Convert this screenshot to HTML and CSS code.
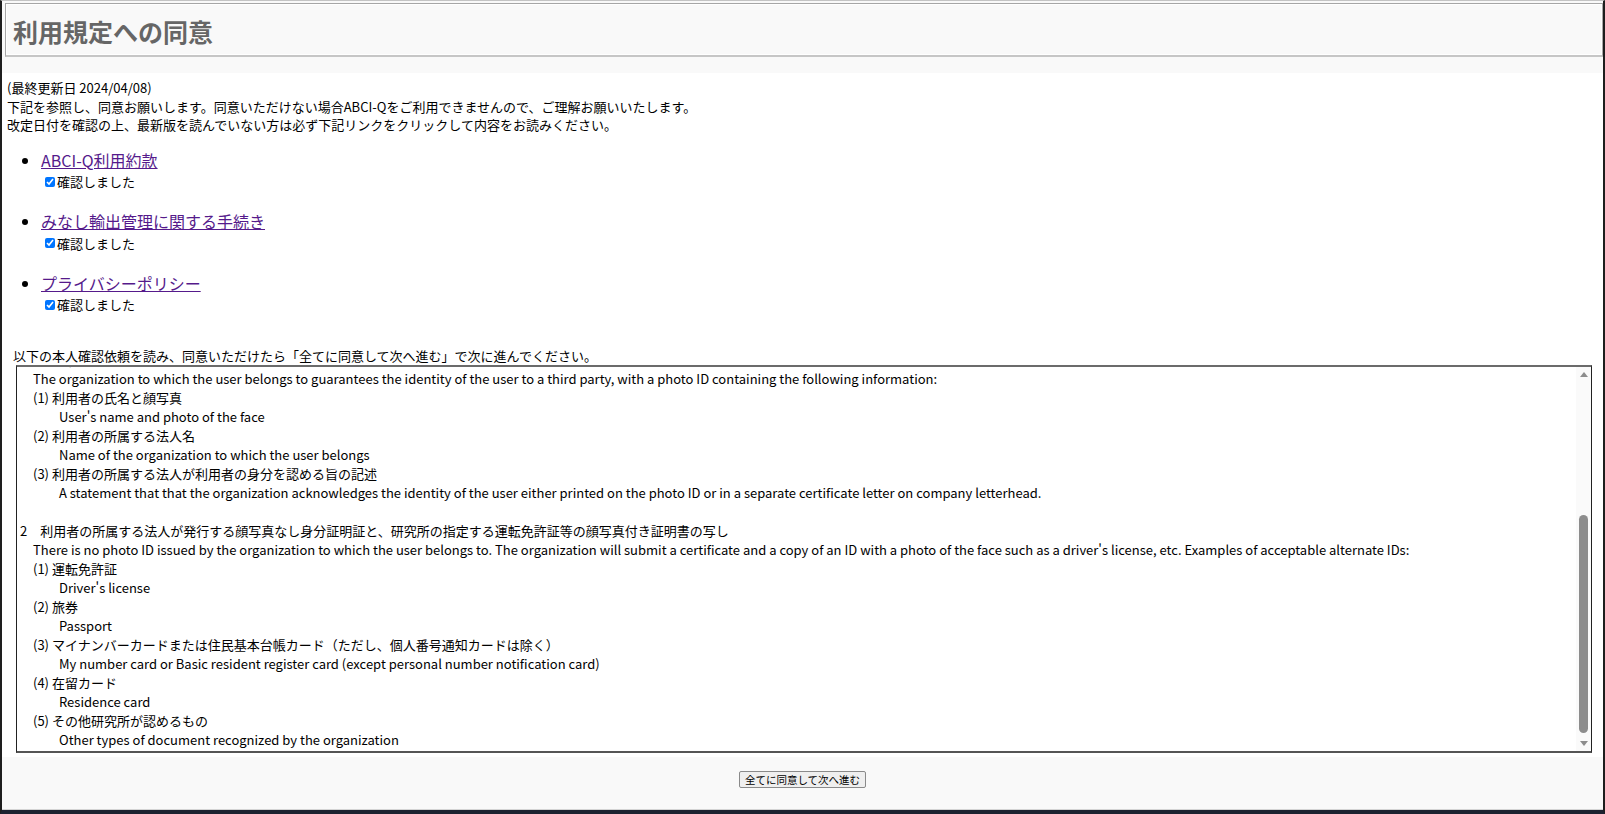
FILE: index.html
```html
<!DOCTYPE html>
<html lang="ja">

<head>
  <meta charset="UTF-8">
  <meta name="viewport" content="width=device-width, initial-scale=1.0">
  <title>利用規定への同意</title>
  <link rel="stylesheet" href="styles.css">
</head>

<body>
  <div class="page">
    <header class="head">
      <h1>利用規定への同意</h1>
    </header>

    <main class="main">
      <p class="intro">(最終更新日 2024/04/08)<br>下記を参照し、同意お願いします。同意いただけない場合ABCI-Qをご利用できませんので、ご理解お願いいたします。<br>改定日付を確認の上、最新版を読んでいない方は必ず下記リンクをクリックして内容をお読みください。</p>

      <ul class="docs">
        <li><a href="#">ABCI-Q利用約款</a><label class="check"><input type="checkbox" checked><span>確認しました</span></label></li>
        <li><a href="#">みなし輸出管理に関する手続き</a><label class="check"><input type="checkbox" checked><span>確認しました</span></label></li>
        <li><a href="#">プライバシーポリシー</a><label class="check"><input type="checkbox" checked><span>確認しました</span></label></li>
      </ul>

      <div class="lead">以下の本人確認依頼を読み、同意いただけたら「全てに同意して次へ進む」で次に進んでください。</div>
      <div class="terms">
        <div class="terms_text">本人確認について
About identity verification

ABCI-Qの利用者は、本人確認のため以下のいずれかの書類を提出してください。
ABCI-Q users are required to submit one of the following documents for identity verification.
提出された書類は本人確認の目的にのみ使用します。
The submitted documents will be used only for the purpose of identity verification.

本人確認依頼
Request for identity verification
以下の1または2のいずれかの書類を提出してください。
1　利用者の所属する法人が発行する顔写真付き身分証明証で、以下の情報が記載されているもの
　The organization to which the user belongs to guarantees the identity of the user to a third party, with a photo ID containing the following information:
　(1) 利用者の氏名と顔写真
　　　User's name and photo of the face
　(2) 利用者の所属する法人名
　　　Name of the organization to which the user belongs
　(3) 利用者の所属する法人が利用者の身分を認める旨の記述
　　　A statement that that the organization acknowledges the identity of the user either printed on the photo ID or in a separate certificate letter on company letterhead.

2　利用者の所属する法人が発行する顔写真なし身分証明証と、研究所の指定する運転免許証等の顔写真付き証明書の写し
　There is no photo ID issued by the organization to which the user belongs to. The organization will submit a certificate and a copy of an ID with a photo of the face such as a driver's license, etc. Examples of acceptable alternate IDs:
　(1) 運転免許証
　　　Driver's license
　(2) 旅券
　　　Passport
　(3) マイナンバーカードまたは住民基本台帳カード（ただし、個人番号通知カードは除く）
　　　My number card or Basic resident register card (except personal number notification card)
　(4) 在留カード
　　　Residence card
　(5) その他研究所が認めるもの
　　　Other types of document recognized by the organization</div>
        <div class="scroll">
          <div class="scroll_btn up"></div>
          <div class="scroll_track">
            <div class="scroll_thumb"></div>
          </div>
          <div class="scroll_btn down"></div>
        </div>
      </div>
    </main>

    <footer class="foot">
      <button type="button">全てに同意して次へ進む</button>
    </footer>
  </div>
  <script>
    const text = document.querySelector('.terms_text')
    text.scrollTop = text.scrollHeight
  </script>
</body>

</html>
```

FILE: styles.css
```css
* {
  box-sizing: border-box;
}

html,
body {
  margin: 0;
  padding: 0;
}

body {
  font-family: "Noto Sans CJK JP", "Noto Sans", sans-serif;
  font-size: 13px;
  color: #000;
  background: #1c2230;
}

.page {
  display: flex;
  flex-direction: column;
  height: 814px;
  background-color: #f9f9f9;
  border-top: 1px solid #c4c4c4;
  border-left: 2px solid #1e1e1e;
  border-right: 2px solid #1e1e1e;
  border-bottom: 4px solid #1c2230;
}

.head {
  height: 54px;
  margin: 2px 0 16px 3px;
  padding: 0 7px;
  display: flex;
  align-items: center;
  background-color: #f9f9f9;
  border: 1px solid #a6a6a6;
  border-bottom: 2px solid #c6c6c6;
  box-shadow: inset 0 0 0 1px #fff;
}

.head h1 {
  margin: 0;
  padding-top: 3px;
  font-size: 25px;
  line-height: 30px;
  font-weight: bold;
  color: #666;
}

.main {
  flex: 1;
  padding: 6px 5px 0;
  background-color: #fff;
}

.intro {
  margin: 0;
  line-height: 18.5px;
}

.docs {
  margin: 14px 0 32px;
  padding-left: 34px;
}

.docs li {
  font-size: 16px;
  line-height: 23.5px;
  margin-bottom: 19px;
}

.docs a {
  color: #551a8b;
}

.check {
  display: flex;
  align-items: center;
  height: 19px;
  font-size: 13px;
  line-height: 19px;
}

.check input {
  width: 10px;
  height: 10px;
  margin: 0 2px 0 4px;
}

.lead {
  margin-left: 6px;
  line-height: 19px;
}

.terms {
  display: flex;
  width: calc(100% - 15px);
  height: 388px;
  margin-left: 9px;
  background-color: #fff;
  border: 1px solid #222;
  border-top: 2px solid #6b6b6b;
  border-bottom: 2px solid #555;
}

.terms_text {
  flex: 1;
  padding: 2px 3px;
  font-size: 13px;
  line-height: 19px;
  white-space: pre;
  overflow: hidden;
}

.scroll {
  width: 15px;
  display: flex;
  flex-direction: column;
  background-color: #fafafa;
}

.scroll_btn {
  height: 15px;
  display: flex;
  justify-content: center;
  align-items: center;
}

.scroll_btn::before {
  content: '';
  border-left: 4px solid transparent;
  border-right: 4px solid transparent;
}

.scroll_btn.up::before {
  border-bottom: 5px solid #8d8d8d;
}

.scroll_btn.down::before {
  border-top: 5px solid #8d8d8d;
}

.scroll_track {
  flex: 1;
  display: flex;
  flex-direction: column;
  justify-content: flex-end;
  align-items: center;
  padding-bottom: 3px;
}

.scroll_thumb {
  width: 9px;
  height: 218px;
  border-radius: 5px;
  background-color: #8d8d8d;
}

.foot {
  height: 53px;
  display: flex;
  justify-content: center;
  align-items: flex-start;
  padding-top: 14px;
  background-color: #f9f9f9;
  border-bottom: 1px solid #d4d4d4;
}

.foot button {
  height: 17px;
  padding: 0 5px;
  font-family: "Noto Sans CJK JP", sans-serif;
  font-size: 10.5px;
  line-height: 15px;
  color: #000;
  background-color: #efefef;
  border: 1px solid #8a8a8a;
  border-radius: 2px;
}
```
